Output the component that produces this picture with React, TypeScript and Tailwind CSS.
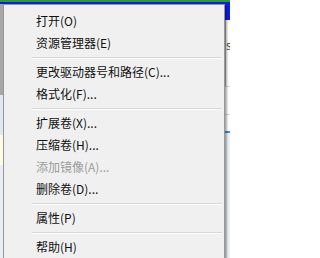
import React from 'react';

type Item = { label: string; disabled?: boolean } | 'sep';

const items: Item[] = [
  { label: '打开(O)' },
  { label: '资源管理器(E)' },
  'sep',
  { label: '更改驱动器号和路径(C)...' },
  { label: '格式化(F)...' },
  'sep',
  { label: '扩展卷(X)...' },
  { label: '压缩卷(H)...' },
  { label: '添加镜像(A)...', disabled: true },
  { label: '删除卷(D)...' },
  'sep',
  { label: '属性(P)' },
  'sep',
  { label: '帮助(H)' },
];

const App: React.FC = () => {
  return (
    <div
      className="relative w-[230px] h-[258px] overflow-hidden bg-white flex flex-col"
      style={{ fontFamily: '"Noto Sans CJK SC", "Noto Sans", sans-serif' }}
    >
      {/* window behind the menu */}
      <div className="h-[2px] bg-[#2f9a2f]" />
      <div className="h-[2px] bg-[#0b1ee6]" />
      <div className="flex flex-1">
        <div className="w-[3px] flex flex-col">
          <div className="h-[91px] bg-[#a7a7a7]" />
          <div className="h-[40px] bg-[#dfe8f3]" />
          <div className="h-[30px] bg-[#fbfbe6]" />
          <div className="flex-1 bg-[#e9eef5]" />
        </div>
        <div className="flex-1" />
        <div className="w-[5px] flex flex-col">
          <div className="h-[16px] bg-[#0b1ee6]" />
          <div className="h-[66px] bg-white border-l border-[#b5b5b5] text-[9px] leading-[9px] text-[#333] pt-[22px] overflow-hidden">
            S
          </div>
          <div className="h-[28px] border-t border-[#d8d8d8] bg-white" />
          <div className="h-[17px] border-t border-[#d8d8d8] bg-white" />
          <div className="h-[2px] bg-[#3a8ee6]" />
          <div className="flex-1 bg-[#eef1f5]" />
        </div>
      </div>

      {/* context menu */}
      <div className="absolute left-[3px] top-[4px] w-[222px] h-[270px] bg-[#f0f0f0] border border-[#979797] shadow-[2px_2px_2px_rgba(0,0,0,0.35)] px-[2px] pt-[5px]">
        {items.map((it, i) =>
          it === 'sep' ? (
            <div key={i} className="h-[7px] flex items-center ml-[26px]">
              <div className="w-full h-[2px] border-t border-[#d7d7d7] border-b border-b-white" />
            </div>
          ) : (
            <div
              key={i}
              className={`h-[22px] flex items-center pl-[30px] text-[12px] leading-none ${
                it.disabled ? 'text-[#9c9c9c]' : 'text-[#111]'
              }`}
            >
              {it.label}
            </div>
          )
        )}
      </div>
    </div>
  );
};

export default App;
